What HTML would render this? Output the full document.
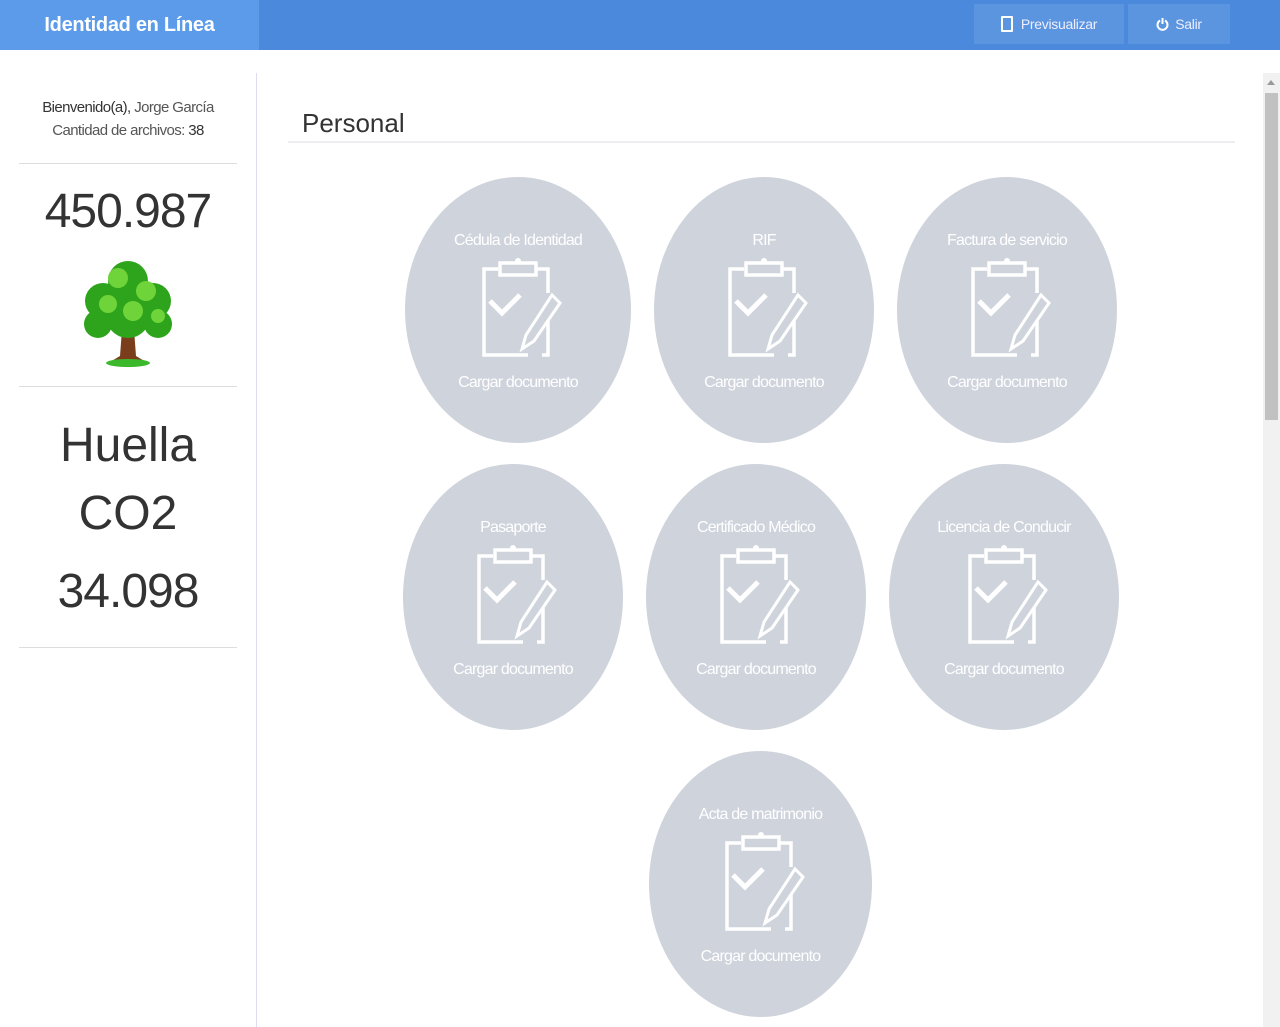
<!DOCTYPE html>
<html><head><meta charset="utf-8"><style>
body{margin:0;width:1280px;height:1027px;overflow:hidden;background:#fff;font-family:"Liberation Sans",sans-serif;position:relative}
.hdr{position:absolute;left:0;top:0;width:1280px;height:50px;background:#4a89dc}
.brand{position:absolute;left:0;top:0;width:259px;height:50px;background:#5b9be9;color:#fff;font-size:20px;font-weight:bold;line-height:50px;text-align:center;letter-spacing:-0.3px}
.btn{position:absolute;top:4px;height:40px;background:#5b95df;color:#eef;font-size:14px;line-height:40px;text-align:center;letter-spacing:-0.3px}
.side{position:absolute;left:256px;top:73px;width:1px;height:954px;background:#dde}
.hr{position:absolute;left:19px;width:218px;height:1px;background:#ddd}
.c{position:absolute;border-radius:50%;background:#cfd3dc;color:#fff;text-align:center;font-size:16px;letter-spacing:-0.8px}
.c .t{position:absolute;left:0;right:0;top:55px}
.c .b{position:absolute;left:0;right:0;top:197px}
.c svg{position:absolute;left:50%;margin-left:-42px;top:80px}
.sb{position:absolute;left:1263px;top:73px;width:17px;height:954px;background:#f1f1f1}
</style></head><body>
<div class="hdr"><div class="brand">Identidad en Línea</div>
<div class="btn" style="left:974px;width:150px"><span style="display:inline-block;width:8px;height:12px;border:2px solid #fff;border-radius:1px;vertical-align:-3px;margin-right:8px"></span>Previsualizar</div>
<div class="btn" style="left:1128px;width:102px"><svg width="13" height="14" viewBox="0 0 13 14" style="vertical-align:-2px;margin-right:6px"><path d="M4 3.5A5 5 0 1 0 9 3.5" fill="none" stroke="#fff" stroke-width="2"/><path d="M6.5 1V7" stroke="#fff" stroke-width="2"/></svg>Salir</div>
</div>
<div style="position:absolute;left:0;width:256px;top:96px;text-align:center;font-size:15px;color:#333;line-height:23px;letter-spacing:-0.6px">Bienvenido(a), <span style="color:#555">Jorge García</span><br><span style="color:#555">Cantidad de archivos:</span> 38</div>
<div class="hr" style="top:163px"></div>
<div style="position:absolute;left:0;width:256px;top:184px;text-align:center;font-size:48px;color:#333;letter-spacing:-1px">450.987</div>
<svg style="position:absolute;left:78px;top:256px" width="100" height="112" viewBox="0 0 100 112">
<path d="M45 60 L42 100 L32 106 L68 106 L58 100 L55 60Z" fill="#7a3e1c"/>
<ellipse cx="50" cy="107" rx="22" ry="4" fill="#3cb82c"/>
<g fill="#2ea41c"><circle cx="25" cy="45" r="18"/><circle cx="75" cy="45" r="18"/><circle cx="50" cy="25" r="20"/><circle cx="50" cy="60" r="22"/><circle cx="20" cy="68" r="14"/><circle cx="80" cy="68" r="14"/></g>
<g fill="#6fd43a"><circle cx="40" cy="22" r="10"/><circle cx="68" cy="35" r="10"/><circle cx="30" cy="48" r="9"/><circle cx="55" cy="55" r="10"/><circle cx="80" cy="60" r="7"/></g>
</svg>
<div class="hr" style="top:386px"></div>
<div style="position:absolute;left:0;width:256px;top:412px;text-align:center;font-size:48px;color:#333;line-height:68px">Huella<br>CO2</div>
<div style="position:absolute;left:0;width:256px;top:564px;text-align:center;font-size:48px;color:#333;letter-spacing:-1px">34.098</div>
<div class="hr" style="top:647px"></div>
<div class="side"></div>
<div style="position:absolute;left:302px;top:108px;font-size:26px;color:#333">Personal</div>
<div style="position:absolute;left:288px;top:141px;width:947px;height:2px;background:#eceef3"></div>
<svg width="0" height="0" style="position:absolute"><defs><g id="ic" fill="none" stroke="#fff" stroke-width="3.5"><path d="M22 12H8V98H52M66 98H72V64M72 36V12H60"/><rect x="24" y="6" width="36" height="12" fill="#cfd3dc"/><circle cx="42" cy="4" r="3" fill="#fff" stroke="none"/><path d="M14 44L26 56L44 38" stroke-width="5"/><path d="M76 38L84 46L58 84L46 92L50 78Z" stroke-width="3"/></g></defs></svg>
<div class="c" style="left:405px;top:177px;width:226px;height:266px"><div class="t">Cédula de Identidad</div><svg width="90" height="104"><use href="#ic"/></svg><div class="b">Cargar documento</div></div>
<div class="c" style="left:654px;top:177px;width:220px;height:266px"><div class="t">RIF</div><svg width="90" height="104"><use href="#ic"/></svg><div class="b">Cargar documento</div></div>
<div class="c" style="left:897px;top:177px;width:220px;height:266px"><div class="t">Factura de servicio</div><svg width="90" height="104"><use href="#ic"/></svg><div class="b">Cargar documento</div></div>
<div class="c" style="left:403px;top:464px;width:220px;height:266px"><div class="t">Pasaporte</div><svg width="90" height="104"><use href="#ic"/></svg><div class="b">Cargar documento</div></div>
<div class="c" style="left:646px;top:464px;width:220px;height:266px"><div class="t">Certificado Médico</div><svg width="90" height="104"><use href="#ic"/></svg><div class="b">Cargar documento</div></div>
<div class="c" style="left:889px;top:464px;width:230px;height:266px"><div class="t">Licencia de Conducir</div><svg width="90" height="104"><use href="#ic"/></svg><div class="b">Cargar documento</div></div>
<div class="c" style="left:649px;top:751px;width:223px;height:266px"><div class="t">Acta de matrimonio</div><svg width="90" height="104"><use href="#ic"/></svg><div class="b">Cargar documento</div></div>
<div class="sb"><div style="position:absolute;left:4px;top:7px;border:4px solid transparent;border-bottom:5px solid #999;border-top:0"></div><div style="position:absolute;left:2px;top:20px;width:13px;height:327px;background:#c1c1c1"></div></div>
</body></html>
